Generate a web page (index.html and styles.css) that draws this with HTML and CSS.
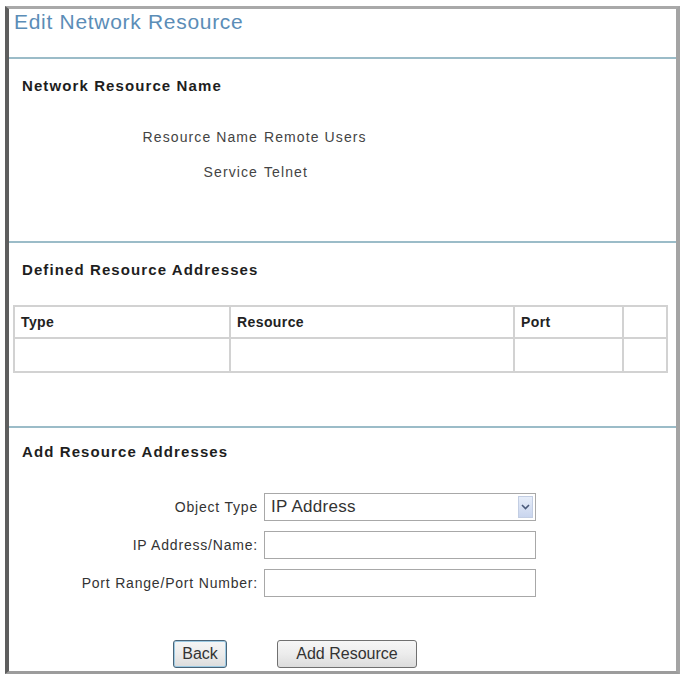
FILE: index.html
```html
<!DOCTYPE html>
<html lang="en">

<head>
    <meta charset="UTF-8">
    <meta name="viewport" content="width=device-width, initial-scale=1.0">
    <title>Edit Network Resource</title>
    <link rel="stylesheet" href="styles.css">
</head>

<body>
    <div class="panel">
        <h1 class="title">Edit Network Resource</h1>
        <div class="rule"></div>

        <div class="section name-section">
            <h2>Network Resource Name</h2>
            <div class="info">
                <span class="info-label">Resource Name</span>
                <span class="info-value">Remote Users</span>
                <span class="info-label">Service</span>
                <span class="info-value">Telnet</span>
            </div>
        </div>
        <div class="rule"></div>

        <div class="section defined-section">
            <h2>Defined Resource Addresses</h2>
            <table class="addresses">
                <colgroup>
                    <col class="col-type">
                    <col class="col-resource">
                    <col class="col-port">
                    <col>
                </colgroup>
                <thead>
                    <tr>
                        <th>Type</th>
                        <th>Resource</th>
                        <th>Port</th>
                        <th></th>
                    </tr>
                </thead>
                <tbody>
                    <tr>
                        <td></td>
                        <td></td>
                        <td></td>
                        <td></td>
                    </tr>
                </tbody>
            </table>
        </div>
        <div class="rule"></div>

        <div class="section add-section">
            <h2>Add Resource Addresses</h2>
            <form class="add-form">
                <label for="objType">Object Type</label>
                <div class="select" id="objType">
                    <span>IP Address</span>
                    <span class="select-arrow">
                        <svg width="9" height="6" viewBox="0 0 9 6">
                            <path d="M1 1 L4.5 4.5 L8 1" fill="none" stroke="#4a5a7a" stroke-width="1.6"/>
                        </svg>
                    </span>
                </div>

                <label for="ipName">IP Address/Name:</label>
                <input type="text" id="ipName">

                <label for="portRange">Port Range/Port Number:</label>
                <input type="text" id="portRange">
            </form>
            <div class="actions">
                <button type="button" class="btn btn-back">Back</button>
                <button type="button" class="btn btn-add">Add Resource</button>
            </div>
        </div>
    </div>
</body>

</html>
```

FILE: styles.css
```css
body {
    margin: 0;
    background-color: #fff;
    font-family: "Liberation Sans", Arial, sans-serif;
    color: #3a3a3a;
}

.panel {
    margin: 6px 0 0 5px;
    width: 675px;
    height: 668px;
    box-sizing: border-box;
    border-left: 4px solid #5e5e5e;
    border-top: 3px solid #a9a9a9;
    border-right: 4px solid #a4a4a4;
    border-bottom: 3px solid #9c9c9c;
    display: flex;
    flex-direction: column;
}

.title {
    margin: 0;
    height: 48px;
    padding: 1px 0 0 5px;
    box-sizing: border-box;
    font-size: 21px;
    font-weight: normal;
    line-height: 24px;
    letter-spacing: 0.7px;
    color: #5b8db7;
}

.rule {
    height: 2px;
    background-color: #9bbcc8;
}

.section h2 {
    margin: 0;
    padding-left: 13px;
    font-size: 15px;
    line-height: 18px;
    letter-spacing: 1.1px;
    color: #1e1e1e;
}

.name-section {
    height: 182px;
    padding-top: 18px;
    box-sizing: border-box;
}

.info {
    display: grid;
    grid-template-columns: 249px auto;
    column-gap: 6px;
    row-gap: 13px;
    margin-top: 31px;
    font-size: 14px;
    line-height: 22px;
    letter-spacing: 1.1px;
    color: #444;
}

.info-label {
    text-align: right;
}

.defined-section {
    height: 183px;
    padding-top: 18px;
    box-sizing: border-box;
}

table.addresses {
    border-collapse: collapse;
    table-layout: fixed;
    margin: 26px 0 0 4px;
    width: 655px;
    border: 2px solid #bdbdbd;
}

.addresses th,
.addresses td {
    border: 2px solid #d2d2d2;
    padding: 0 6px;
    text-align: left;
    font-size: 14px;
    letter-spacing: 0.4px;
    color: #222;
}

.addresses th {
    height: 30px;
}

.addresses td {
    height: 32px;
}

.col-type {
    width: 216px;
}

.col-resource {
    width: 284px;
}

.col-port {
    width: 109px;
}

.add-section {
    flex: 1;
    padding-top: 15px;
    box-sizing: border-box;
}

.add-form {
    display: grid;
    grid-template-columns: 249px 272px;
    column-gap: 6px;
    row-gap: 10px;
    margin-top: 32px;
    align-items: center;
}

.add-form label {
    text-align: right;
    font-size: 14px;
    letter-spacing: 0.8px;
    color: #333;
}

.select,
.add-form input[type="text"] {
    height: 28px;
    box-sizing: border-box;
    border: 1px solid #a8a8a8;
    background-color: #fff;
    font-family: inherit;
}

.select {
    display: flex;
    align-items: center;
    justify-content: space-between;
    padding: 0 2px 0 6px;
    font-size: 17px;
    letter-spacing: 0.3px;
    color: #333;
}

.select-arrow {
    width: 15px;
    height: 22px;
    display: flex;
    align-items: center;
    justify-content: center;
    background: linear-gradient(#e6edf9, #c9d5ee);
    border: 1px solid #c3cee3;
    box-sizing: border-box;
}

.actions {
    display: flex;
    margin-top: 43px;
    padding-left: 164px;
    gap: 50px;
}

.btn {
    height: 28px;
    font-family: inherit;
    font-size: 16px;
    color: #333;
    background: linear-gradient(#f6f6f6 0%, #ececec 50%, #dcdcdc 100%);
    border: 1px solid #707070;
    border-radius: 3px;
    padding: 0;
}

.btn-back {
    width: 54px;
    border-color: #4a6478;
    box-shadow: inset 0 0 0 1px #9cc9e2;
}

.btn-add {
    width: 140px;
}
```
